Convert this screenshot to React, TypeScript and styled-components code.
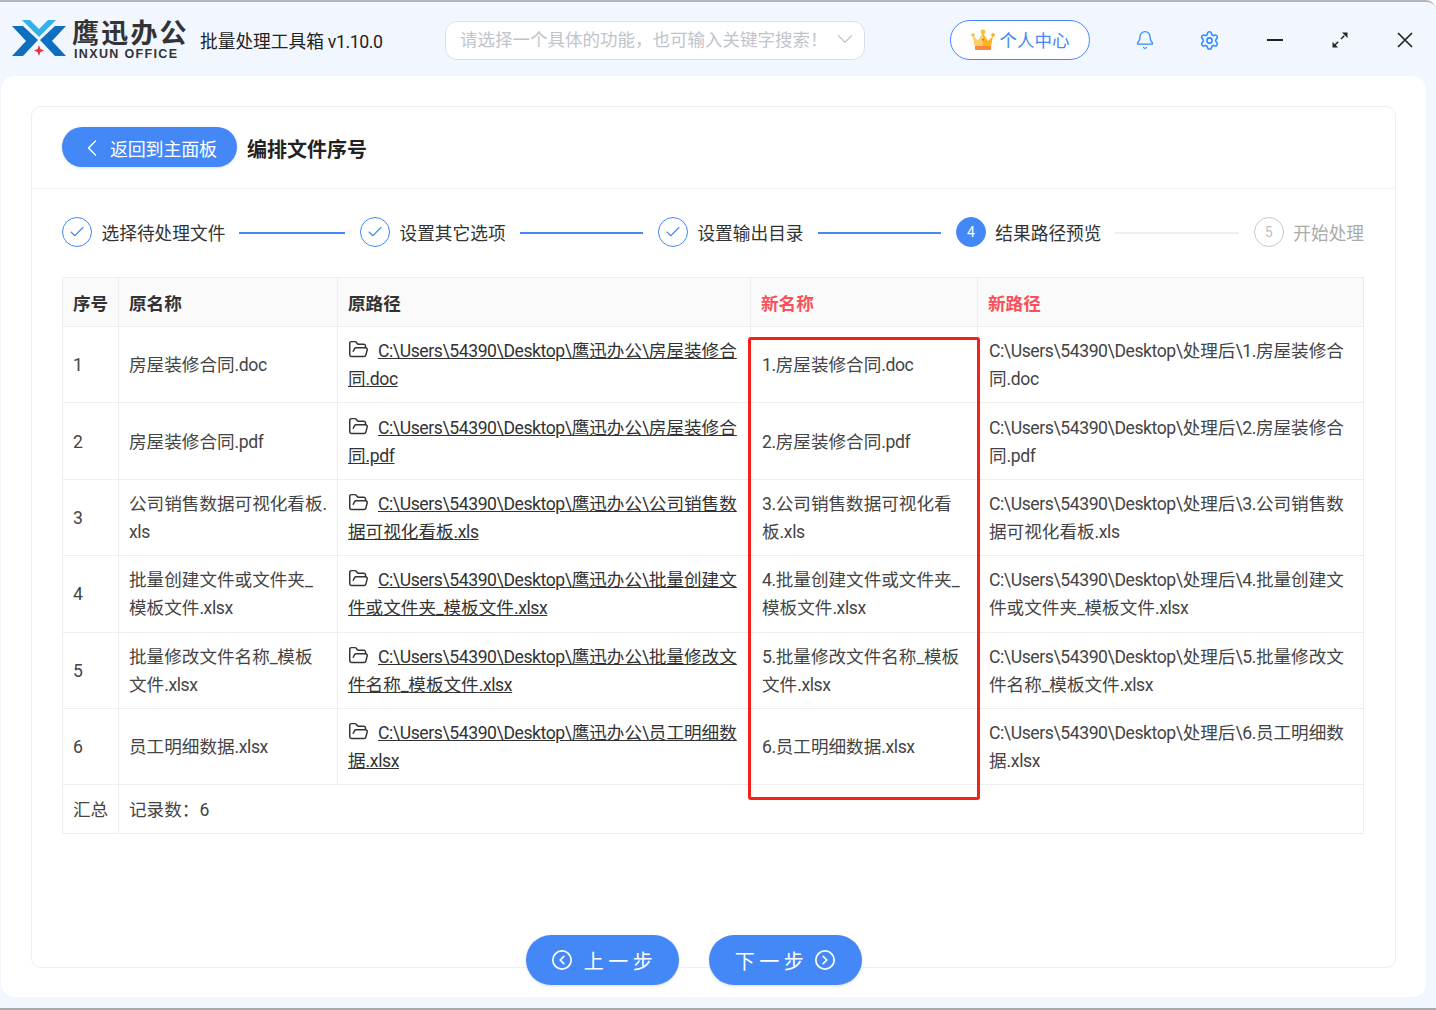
import React from "react";
import styled, { createGlobalStyle } from "styled-components";
import { Bell, Settings, ChevronLeft, ChevronDown, Check, FolderOpen, CircleChevronLeft, CircleChevronRight } from "lucide-react";

const Global = createGlobalStyle`
  html, body { margin: 0; padding: 0; background: #fff; }
  body { font-family: Roboto, "Noto Sans CJK SC", sans-serif; color: #333; font-size: 18px; }
  * { box-sizing: border-box; }
`;

const Win = styled.div`
  width: 1436px; height: 1010px; background: #f2f6ff; overflow: hidden;
  border-top: 2px solid #b4b6bd; border-bottom: 2px solid #a9a9a9;
  border-top-right-radius: 10px;
  display: flex; flex-direction: column;
`;
const Header = styled.header`
  height: 74px; flex: none; display: flex; align-items: center; padding: 2px 0 0 12px;
`;
const LogoWrap = styled.div`display: flex; align-items: center; gap: 5px; width: 175px; margin-top: -4px;`;
const LogoText = styled.div`display: flex; flex-direction: column; width: 115px; color: #333; margin-top: 4px;`;
const LogoCn = styled.div`font-size: 27px; font-weight: 700; line-height: 27px; letter-spacing: 2.2px; white-space: nowrap; font-family: "Noto Sans CJK SC", sans-serif; margin-top: -3px;`;
const LogoEn = styled.div`font-size: 12.5px; font-weight: 700; line-height: 12px; letter-spacing: 1.35px; white-space: nowrap; font-family: "Liberation Sans", sans-serif; margin-left: 2px; margin-top: 3px;`;
const AppTitle = styled.div`margin-left: 13px; width: 182px; white-space: nowrap; font-size: 17.7px; color: #222;`;
const Search = styled.div`
  margin-left: 63px; width: 420px; height: 39px; flex: none; border: 1px solid #dcdfe6; border-radius: 12px; background: #fff;
  display: flex; align-items: center; justify-content: space-between; padding: 0 6px 3px 14px; color: #c0c4cc; white-space: nowrap; font-size: 17.5px;
`;
const Profile = styled.div`
  margin-left: 85px; width: 140px; height: 40px; flex: none; border: 1px solid #4488f8; border-radius: 20px; background: #fff;
  display: flex; align-items: center; justify-content: center; gap: 5px; color: #4488f8; white-space: nowrap; font-size: 17.5px; padding-bottom: 1px;
`;
const IconCell = styled.div<{ $first?: boolean; $color?: string }>`
  width: 65px; flex: none; display: flex; justify-content: center; align-items: center; color: ${p => p.$color || "#222"};
  margin-left: ${p => (p.$first ? "22px" : "0")};
`;
const Panel = styled.main`
  flex: 1; margin: 0 10px 11px 1px; background: #fff; border-radius: 14px; padding: 30px 30px 29px 30px; display: flex;
`;
const Card = styled.section`
  position: relative; flex: 1; border: 1px solid #eeeeee; border-radius: 10px;
`;
const TopBar = styled.div`
  height: 82px; border-bottom: 1px solid #f0f0f0; display: flex; align-items: center; padding: 0 30px 2px; gap: 10px;
`;
const BackBtn = styled.button`
  width: 175px; height: 40px; border: 0; border-radius: 20px; background: #4488f8; color: #fff; font: inherit;
  display: flex; align-items: center; justify-content: flex-start; gap: 4px; box-shadow: 0 1px 3px rgba(0,0,0,.12); padding: 2px 0 0 16px;
  letter-spacing: -0.2px;
`;
const PageTitle = styled.h1`margin: 4px 0 0; font-size: 20px; font-weight: 700; color: #222;`;
const Steps = styled.div`display: flex; padding: 28px 30px 0; height: 88px;`;
const Step = styled.div<{ $last?: boolean }>`
  flex: ${p => (p.$last ? "none" : "1")}; display: flex; align-items: center; height: 30px; white-space: nowrap;
  padding-right: ${p => (p.$last ? "1px" : "0")};
`;
const StepCircle = styled.div<{ $state: "done" | "active" | "todo" }>`
  width: 30px; height: 30px; border-radius: 50%; flex: none; display: flex; align-items: center; justify-content: center; font-size: 14px;
  border: 1px solid ${p => (p.$state === "todo" ? "#c8c8c8" : "#4488f8")};
  color: ${p => (p.$state === "active" ? "#fff" : p.$state === "done" ? "#4488f8" : "#c0c0c0")};
  background: ${p => (p.$state === "active" ? "#4488f8" : "#fff")};
`;
const StepLabel = styled.span<{ $muted?: boolean }>`
  margin-left: 9.5px; color: ${p => (p.$muted ? "#aaa" : "#333")}; font-size: 17.7px;
`;
const StepLine = styled.div<{ $off?: boolean }>`
  flex: 1; height: 2px; margin: 1px 15px 0 14px; background: ${p => (p.$off ? "#eeeeee" : "#4488f8")};
`;
const TableWrap = styled.div`padding: 0 30px;`;
const Table = styled.table`
  width: 1302px; border-collapse: collapse; table-layout: fixed; margin-left: 0;
  border: 1px solid #eeeeee;
`;
const Th = styled.th<{ $red?: boolean }>`
  height: 49px; padding: 0 0 0 10px; text-align: left; font-weight: 700; font-size: 17.6px; background: #fafafa; border: 1px solid #eeeeee;
  white-space: nowrap; color: ${p => (p.$red ? "#f9505a" : "#333")};
`;
const Td = styled.td<{ $inset?: boolean }>`
  height: 76.4px; padding: 1px 0 0 ${p => (p.$inset ? "11px" : "10px")}; line-height: 28px; border: 1px solid #eeeeee; white-space: nowrap; color: #444; font-size: 17.6px;
  overflow: hidden;
`;
const FootTd = styled(Td)`height: 49px;`;
const FolderMark = styled.span`display: inline-flex; vertical-align: -3px; margin-right: 9px; color: #333;`;
const PathLink = styled.span`color: #333; text-decoration: underline;`;
const Latin = styled.span`letter-spacing: -0.42px;`;
const RedBox = styled.div`
  position: absolute; left: 716px; top: 230px; width: 232px; height: 463px; border: 3px solid #f5201a; border-radius: 3px; pointer-events: none;
`;
const Footer = styled.div`
  position: absolute; left: 494px; bottom: -18px; display: flex; gap: 30px;
`;
const NavBtn = styled.button<{ $gap: number; $pad?: number }>`
  width: 153px; height: 50px; border: 0; border-radius: 25px; background: #4488f8; color: #fff; font: inherit; letter-spacing: 4.5px;
  display: flex; align-items: center; justify-content: center; gap: ${p => p.$gap}px; padding: 0 0 0 ${p => p.$pad || 0}px; font-size: 20px; box-shadow: 0 1px 3px rgba(0,0,0,.15);
`;

const Logo = () => (
  <svg width="55" height="38" viewBox="0 0 55 38">
    <polygon points="0,7 11,7 26,21 11,37 0,37 14,22" fill="#0f6fbf" />
    <polygon points="54,7 43,7 28,21 43,37 54,37 40,22" fill="#0f6fbf" />
    <polygon points="10,1 18,1 27,10 36,1 44,1 27,18" fill="#35b0e8" />
    <polygon points="27,26 28.4,30 32,31.5 28.4,33 27,37 25.6,33 22,31.5 25.6,30" fill="#ee2f3a" />
  </svg>
);
const Crown = () => (
  <svg width="24" height="22" viewBox="0 0 24 22">
    <polygon points="2,7 7,12 12,4 17,12 22,7 20,18 4,18" fill="#ffb31a" />
    <polygon points="2,7 7,12 12,4 12,18 4,18" fill="#fdcc62" />
    <circle cx="2" cy="6" r="1.8" fill="#fbbf3d" /><circle cx="22" cy="6" r="1.8" fill="#f9a81d" /><circle cx="12" cy="3" r="2.4" fill="#fbbf3d" />
    <rect x="4" y="17" width="16" height="4" rx="1" fill="#f58a3c" />
    <polygon points="11,10 13,10 12,12.5" fill="#e8502c" />
  </svg>
);
const Minimize = () => <svg width="18" height="18" viewBox="0 0 18 18"><rect x="1" y="8" width="16" height="2" fill="#222" /></svg>;
const Expand = () => (
  <svg width="18" height="18" viewBox="0 0 18 18" fill="#222" stroke="#222">
    <line x1="4" y1="14" x2="14" y2="4" strokeWidth="1.5" strokeDasharray="4.5 4" />
    <polygon points="11,1.5 16.5,1.5 16.5,7" stroke="none" />
    <polygon points="1.5,11 1.5,16.5 7,16.5" stroke="none" />
  </svg>
);
const Close = () => <svg width="18" height="18" viewBox="0 0 18 18"><path d="M2 2 L16 16 M16 2 L2 16" stroke="#222" strokeWidth="1.7" /></svg>;

const base = "C:\\Users\\54390\\Desktop\\";
const rows = [
  { name: ["房屋装修合同.doc"], path: [base + "鹰迅办公\\房屋装修合", "同.doc"], nn: ["1.房屋装修合同.doc"], np: [base + "处理后\\1.房屋装修合", "同.doc"] },
  { name: ["房屋装修合同.pdf"], path: [base + "鹰迅办公\\房屋装修合", "同.pdf"], nn: ["2.房屋装修合同.pdf"], np: [base + "处理后\\2.房屋装修合", "同.pdf"] },
  { name: ["公司销售数据可视化看板.", "xls"], path: [base + "鹰迅办公\\公司销售数", "据可视化看板.xls"], nn: ["3.公司销售数据可视化看", "板.xls"], np: [base + "处理后\\3.公司销售数", "据可视化看板.xls"] },
  { name: ["批量创建文件或文件夹_", "模板文件.xlsx"], path: [base + "鹰迅办公\\批量创建文", "件或文件夹_模板文件.xlsx"], nn: ["4.批量创建文件或文件夹_", "模板文件.xlsx"], np: [base + "处理后\\4.批量创建文", "件或文件夹_模板文件.xlsx"] },
  { name: ["批量修改文件名称_模板", "文件.xlsx"], path: [base + "鹰迅办公\\批量修改文", "件名称_模板文件.xlsx"], nn: ["5.批量修改文件名称_模板", "文件.xlsx"], np: [base + "处理后\\5.批量修改文", "件名称_模板文件.xlsx"] },
  { name: ["员工明细数据.xlsx"], path: [base + "鹰迅办公\\员工明细数", "据.xlsx"], nn: ["6.员工明细数据.xlsx"], np: [base + "处理后\\6.员工明细数", "据.xlsx"] },
];
const Mixed = ({ t }: { t: string }) => (
  <>{t.split(/([\x00-\x7f]+)/).map((s, i) => (i % 2 ? <Latin key={i}>{s}</Latin> : s))}</>
);
const Lines = ({ l }: { l: string[] }) => (
  <>{l.map((t, i) => <React.Fragment key={i}>{i > 0 && <br />}<Mixed t={t} /></React.Fragment>)}</>
);
const steps = ["选择待处理文件", "设置其它选项", "设置输出目录", "结果路径预览"];

export default function App() {
  return (
    <Win>
      <Global />
      <Header>
        <LogoWrap>
          <Logo />
          <LogoText>
            <LogoCn>鹰迅办公</LogoCn>
            <LogoEn>INXUN OFFICE</LogoEn>
          </LogoText>
        </LogoWrap>
        <AppTitle><Mixed t="批量处理工具箱 v1.10.0" /></AppTitle>
        <Search>
          <span>请选择一个具体的功能，也可输入关键字搜索！</span>
          <ChevronDown size={26} strokeWidth={1.1} />
        </Search>
        <Profile><Crown />个人中心</Profile>
        <IconCell $first $color="#2d8cff"><Bell size={20} strokeWidth={1.6} /></IconCell>
        <IconCell $color="#2d8cff"><Settings size={21} strokeWidth={1.8} /></IconCell>
        <IconCell><Minimize /></IconCell>
        <IconCell><Expand /></IconCell>
        <IconCell><Close /></IconCell>
      </Header>
      <Panel>
        <Card>
          <TopBar>
            <BackBtn><ChevronLeft size={28} strokeWidth={1.2} />返回到主面板</BackBtn>
            <PageTitle>编排文件序号</PageTitle>
          </TopBar>
          <Steps>
            {steps.map((s, i) => (
              <Step key={s}>
                <StepCircle $state={i === 3 ? "active" : "done"}>{i === 3 ? 4 : <Check size={18} strokeWidth={1.5} />}</StepCircle>
                <StepLabel>{s}</StepLabel>
                <StepLine $off={i === 3} />
              </Step>
            ))}
            <Step $last>
              <StepCircle $state="todo">5</StepCircle>
              <StepLabel $muted>开始处理</StepLabel>
            </Step>
          </Steps>
          <TableWrap>
            <Table>
              <colgroup>
                <col style={{ width: 56 }} /><col style={{ width: 219 }} /><col style={{ width: 413 }} /><col style={{ width: 227 }} /><col />
              </colgroup>
              <thead>
                <tr><Th>序号</Th><Th>原名称</Th><Th>原路径</Th><Th $red>新名称</Th><Th $red>新路径</Th></tr>
              </thead>
              <tbody>
                {rows.map((r, i) => (
                  <tr key={i}>
                    <Td>{i + 1}</Td>
                    <Td><Lines l={r.name} /></Td>
                    <Td>
                      <FolderMark><FolderOpen size={21} strokeWidth={1.7} /></FolderMark>
                      <PathLink><Lines l={r.path} /></PathLink>
                    </Td>
                    <Td $inset><Lines l={r.nn} /></Td>
                    <Td $inset><Lines l={r.np} /></Td>
                  </tr>
                ))}
                <tr><FootTd>汇总</FootTd><FootTd colSpan={4}>记录数：6</FootTd></tr>
              </tbody>
            </Table>
          </TableWrap>
          <RedBox />
          <Footer>
            <NavBtn $gap={11} $pad={3}><CircleChevronLeft size={22} strokeWidth={1.9} />上一步</NavBtn>
            <NavBtn $gap={6}>下一步<CircleChevronRight size={22} strokeWidth={1.9} /></NavBtn>
          </Footer>
        </Card>
      </Panel>
    </Win>
  );
}
